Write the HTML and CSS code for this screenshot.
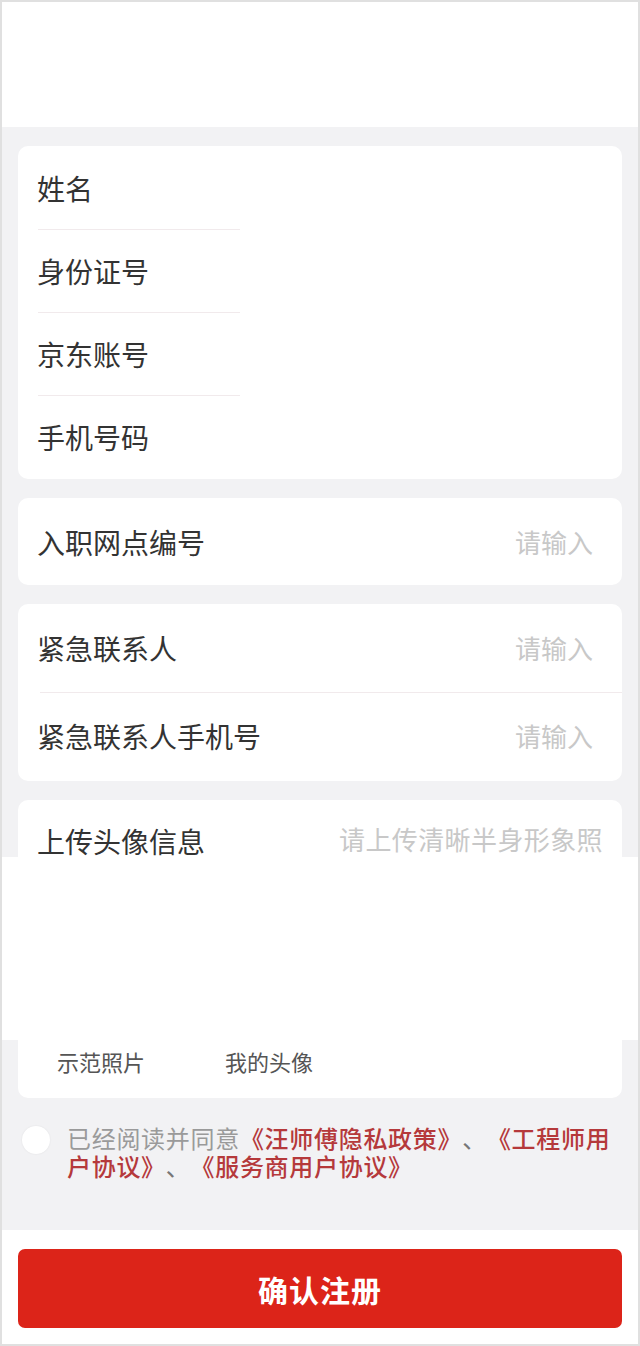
FILE: index.html
```html
<!DOCTYPE html>
<html lang="zh-CN">
<head>
<meta charset="utf-8">
<title>注册</title>
<link rel="stylesheet" href="styles.css">
</head>
<body>
<div class="frame">
  <div class="header"></div>
  <div class="gray gray-top">
    <div class="card card-basic">
      <div class="row"><span class="label">姓名</span></div>
      <div class="row"><span class="label">身份证号</span></div>
      <div class="row"><span class="label">京东账号</span></div>
      <div class="row"><span class="label">手机号码</span></div>
    </div>
    <div class="card card-single">
      <div class="row row-input"><span class="label">入职网点编号</span><span class="ph">请输入</span></div>
    </div>
    <div class="card card-contact">
      <div class="row row-input"><span class="label">紧急联系人</span><span class="ph">请输入</span></div>
      <div class="row row-input"><span class="label">紧急联系人手机号</span><span class="ph">请输入</span></div>
    </div>
    <div class="card card-upload-top">
      <span class="label">上传头像信息</span><span class="ph ph-upload">请上传清晰半身形象照</span>
    </div>
  </div>
  <div class="photo-area"></div>
  <div class="gray gray-bottom">
    <div class="card card-upload-bottom">
      <span class="caption">示范照片</span>
      <span class="caption">我的头像</span>
    </div>
    <div class="agree">
      <span class="radio"></span>
      <div class="agree-text">
        <div class="agree-line"><span class="plain">已经阅读并同意</span><span class="link">《汪师傅隐私政策》</span><span class="sep">、</span><span class="link">《工程师用</span></div>
        <div class="agree-line"><span class="link">户协议》</span><span class="sep">、</span><span class="link">《服务商用户协议》</span></div>
      </div>
    </div>
  </div>
  <div class="footer">
    <button class="submit">确认注册</button>
  </div>
</div>
</body>
</html>
```

FILE: styles.css
```css
* { box-sizing: border-box; }
html, body { margin: 0; padding: 0; background: #fff; }
body {
  font-family: "Noto Sans CJK SC", "Noto Sans", sans-serif;
  color: #333;
}
.frame {
  width: 640px;
  height: 1346px;
  border: 2px solid #e0e0e0;
  background: #fff;
  display: flex;
  flex-direction: column;
  overflow: hidden;
}
.header { height: 125px; background: #fff; }
.gray { background: #f2f2f4; }
.gray-top {
  height: 730px;
  padding: 19px 16px 0;
  display: flex;
  flex-direction: column;
  gap: 19px;
}
.card { background: #fff; border-radius: 10px; }
.row { height: 83px; display: flex; align-items: center; position: relative; }
.card-basic { height: 333px; padding-left: 19px; display: flex; flex-direction: column; }
.card-basic .row + .row::before {
  content: "";
  position: absolute;
  left: 1px;
  top: 0;
  width: 202px;
  height: 1px;
  background: #f1eaec;
}
.label { font-size: 28px; line-height: 34px; color: #333; }
.card-single { height: 87px; padding: 0 29px 0 19px; display: flex; }
.card-single .row { height: 87px; flex: 1; }
.row-input { justify-content: space-between; }
.ph { font-size: 26px; line-height: 30px; color: #c8c8c8; }
.ph-upload { letter-spacing: 0.4px; }
.card-contact { height: 177px; padding: 0 29px 0 19px; display: flex; flex-direction: column; }
.card-contact .row { height: 88px; }
.card-contact .row + .row::before {
  content: "";
  position: absolute;
  left: 3px;
  right: -29px;
  top: 0;
  height: 1px;
  background: #f1eaec;
}
.card-upload-top {
  height: 57px;
  border-radius: 10px 10px 0 0;
  padding: 24px 19px 0 19px;
  display: flex;
  justify-content: space-between;
  align-items: flex-start;
}
.photo-area { height: 183px; background: #fff; }
.gray-bottom { height: 190px; padding: 0 16px; }
.card-upload-bottom {
  height: 58px;
  border-radius: 0 0 10px 10px;
  padding: 7px 0 0 39px;
  display: flex;
  gap: 80px;
  align-items: flex-start;
}
.caption { font-size: 22px; line-height: 28px; color: #555; }
.agree { display: flex; align-items: flex-start; margin: 26px 0 0 4px; gap: 17px; }
.radio {
  flex: none;
  width: 28px;
  height: 28px;
  margin-top: 2px;
  border-radius: 50%;
  background: #fff;
  box-shadow: 0 0 2px rgba(0,0,0,0.08);
}
.agree-text {
  width: 555px;
  font-size: 24px;
  letter-spacing: 0.7px;
  color: #9a9a9a;
  text-spacing-trim: space-all;
}
.agree-line { display: flex; height: 28px; align-items: center; white-space: nowrap; }
.agree-line span { display: block; line-height: 28px; height: 28px; }
.link { color: #b5393b; font-weight: 500; }
.sep { color: #777; }
.footer { flex: 1; background: #fff; padding: 19px 16px 0; }
.submit {
  display: block;
  width: 100%;
  height: 79px;
  border: none;
  border-radius: 7px;
  background: #dc2419;
  color: #fff;
  font-family: "Noto Sans CJK SC", "Noto Sans", sans-serif;
  font-size: 30px;
  font-weight: 700;
  letter-spacing: 1px;
}
```
